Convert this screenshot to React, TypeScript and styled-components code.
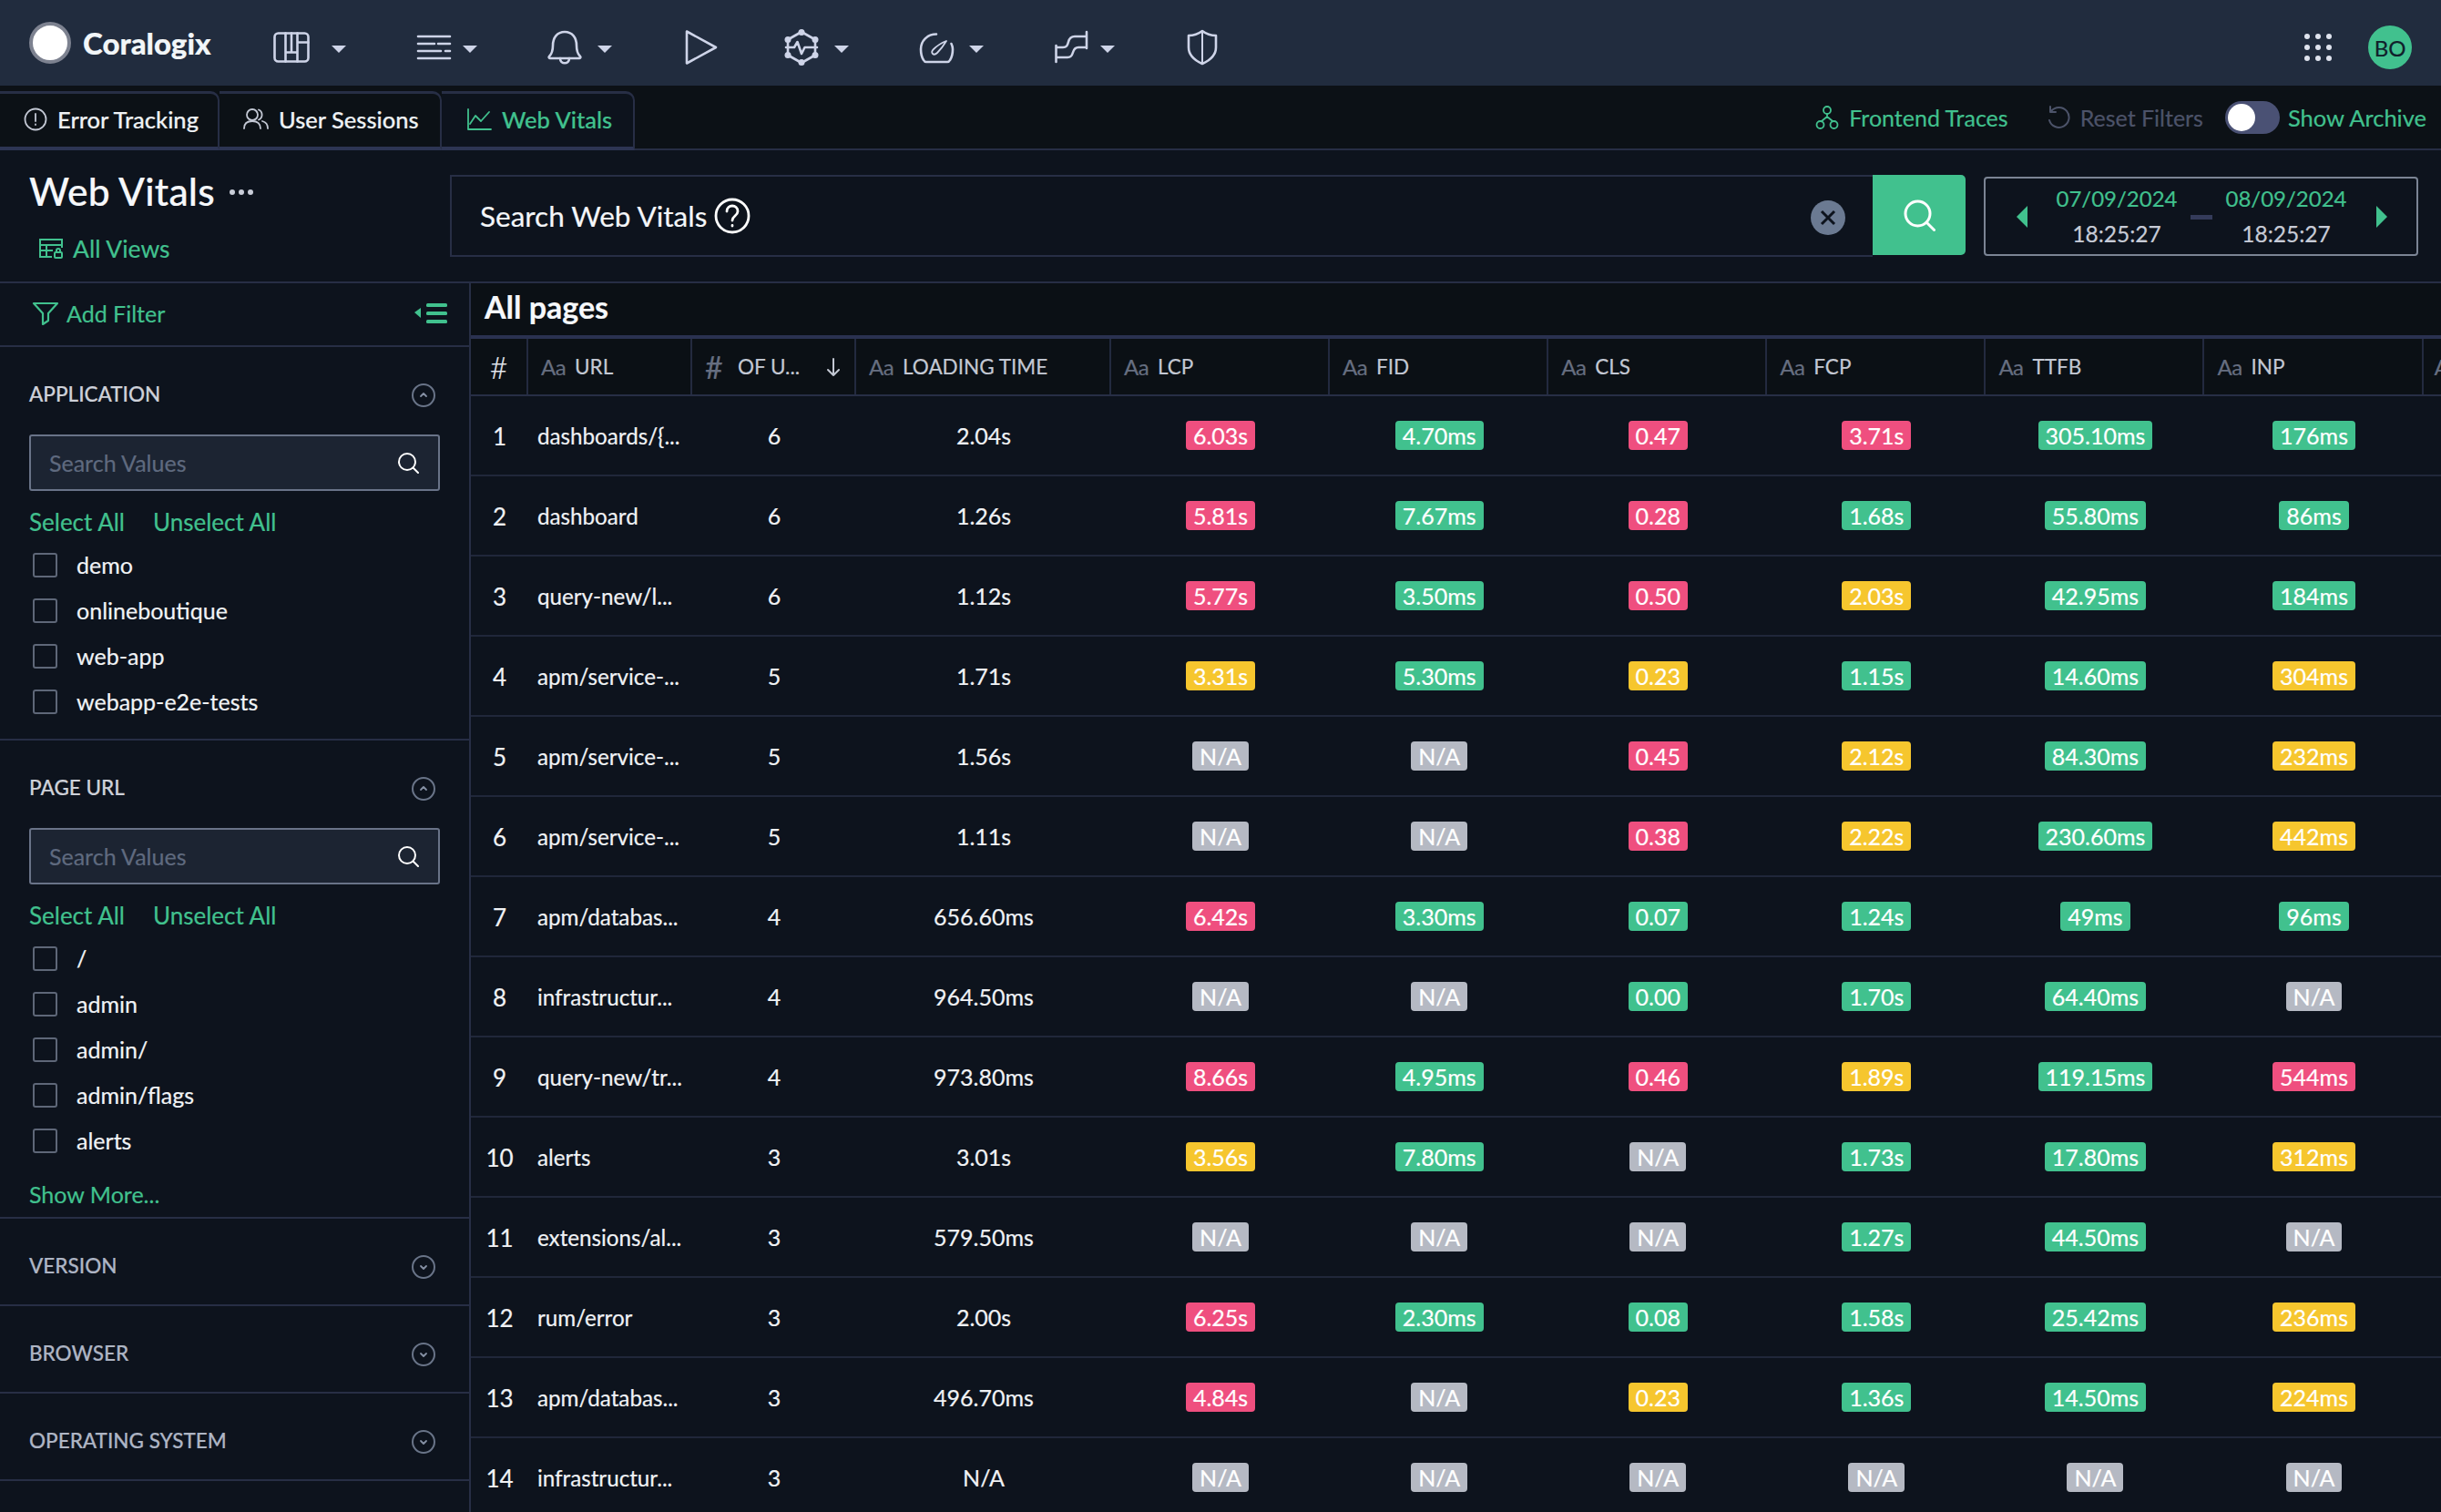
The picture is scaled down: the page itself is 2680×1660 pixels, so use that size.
import React from "react";
import styled, { createGlobalStyle } from "styled-components";

const GREEN = "#41c18e";
const LINE = "#272e45";
const ICON = "#ced4e8";
const FONT = `"Lato", "Noto Sans", sans-serif`;

const Global = createGlobalStyle`
  html, body { margin: 0; padding: 0; background: #0d131d; }
  body { font-family: ${FONT}; overflow: hidden; -webkit-text-stroke: 0.2px; }
  * { box-sizing: border-box; }
`;

const Page = styled.div`
  width: 2680px;
  height: 1660px;
  display: flex;
  flex-direction: column;
  overflow: hidden;
  background: #0d131d;
  color: #fff;
`;

/* ---------- top bar ---------- */
const TopBar = styled.header`
  height: 94px;
  flex: none;
  display: flex;
  align-items: center;
  background: #212c3e;
  padding-left: 32px;
  padding-right: 32px;
`;
const Logo = styled.div`
  width: 268px;
  flex: none;
  display: flex;
  align-items: center;
  gap: 13px;
`;
const LogoDot = styled.span`
  width: 46px;
  height: 46px;
  border-radius: 50%;
  background: #fff;
  border: 4px solid #7d8290;
`;
const LogoText = styled.span`
  font-size: 33px;
  font-weight: 900;
  color: #f2f6f8;
`;
const NavItem = styled.div<{ $w: number; $gap: number }>`
  width: ${(p) => p.$w}px;
  flex: none;
  margin-top: 10px;
  display: flex;
  align-items: center;
  gap: ${(p) => p.$gap}px;
  color: ${ICON};
`;
const Caret = styled.span`
  width: 0;
  height: 0;
  border-left: 8px solid transparent;
  border-right: 8px solid transparent;
  border-top: 8px solid ${ICON};
  margin-top: 3px;
`;
const TopRight = styled.div`
  margin-left: auto;
  margin-top: 10px;
  display: flex;
  align-items: center;
  gap: 40px;
`;
const Avatar = styled.div`
  width: 48px;
  height: 48px;
  border-radius: 50%;
  background: ${GREEN};
  color: #10202a;
  font-size: 24px;
  display: flex;
  align-items: center;
  justify-content: center;
`;

const Ic = ({ children, s = 40 }: { children: React.ReactNode; s?: number }) => (
  <svg width={s} height={s} viewBox="0 0 40 40" fill="none" stroke="currentColor" strokeWidth="2.6" strokeLinecap="round" strokeLinejoin="round">
    {children}
  </svg>
);

/* ---------- sub bar ---------- */
const SubBar = styled.div`
  height: 71px;
  flex: none;
  display: flex;
  align-items: flex-end;
  background: #0c1116;
  border-bottom: 2px solid ${LINE};
`;
const Tab = styled.div<{ $w: number; $active?: boolean }>`
  width: ${(p) => p.$w}px;
  height: 65px;
  margin-bottom: -2px;
  display: flex;
  align-items: center;
  gap: 11px;
  padding-left: ${(p) => (p.$active ? 27 : 26)}px;
  padding-bottom: 3px;
  font-size: 25.5px;
  font-weight: 500;
  background: ${(p) => (p.$active ? "#0d131d" : "#0c1116")};
  border-top: 3px solid ${LINE};
  border-right: 2px solid ${LINE};
  border-bottom: 4px solid #2d3553;
  border-top-right-radius: 10px;
  color: ${(p) => (p.$active ? GREEN : "#eef1f4")};
  svg { color: ${(p) => (p.$active ? GREEN : "#c3c8d4")}; }
`;
const SubRight = styled.div`
  margin-left: auto;
  align-self: center;
  display: flex;
  align-items: center;
  padding-right: 16px;
`;
const SubAction = styled.div<{ $muted?: boolean; $mr?: number }>`
  display: flex;
  align-items: center;
  gap: 11px;
  font-size: 25px;
  margin-right: ${(p) => p.$mr ?? 0}px;
  color: ${(p) => (p.$muted ? "#4c5369" : GREEN)};
`;
const ArchiveLabel = styled(SubAction)`
  font-size: 25.5px;
`;
const Toggle = styled.div`
  width: 60px;
  height: 36px;
  border-radius: 18px;
  background: #4a5174;
  padding: 3px;
  margin-right: 9px;
  display: flex;
`;
const Knob = styled.span`
  width: 30px;
  height: 30px;
  border-radius: 50%;
  background: #fff;
`;

/* ---------- header ---------- */
const Header = styled.div`
  height: 146px;
  flex: none;
  display: flex;
  border-bottom: 2px solid ${LINE};
  padding-left: 32px;
`;
const TitleBlock = styled.div`
  width: 462px;
  flex: none;
  display: flex;
  flex-direction: column;
`;
const TitleRow = styled.div`
  display: flex;
  align-items: center;
  gap: 16px;
  margin-top: 19px;
  height: 50px;
  font-size: 42.5px;
  font-weight: 500;
  color: #f6f8fb;
  letter-spacing: 0.2px;
`;
const Dots = styled.span`
  display: flex;
  gap: 4px;
  margin-top: 4px;
`;
const Dot = styled.i`
  width: 6px;
  height: 6px;
  border-radius: 50%;
  background: #c8cdd8;
`;
const AllViews = styled.div`
  display: flex;
  align-items: center;
  gap: 10px;
  margin-top: 23px;
  margin-left: 10px;
  font-size: 26.5px;
  color: ${GREEN};
`;
const SearchBox = styled.div`
  margin-top: 27px;
  width: 1562px;
  height: 90px;
  flex: none;
  display: flex;
  align-items: center;
  border: solid ${LINE};
  border-width: 2px 0 2px 2px;
  padding-left: 31px;
  padding-right: 30px;
  font-size: 31.5px;
  color: #f4f6f9;
  gap: 8px;
`;
const ClearBtn = styled.span`
  margin-left: auto;
  margin-top: 4px;
  width: 38px;
  height: 38px;
  border-radius: 50%;
  background: #6b7a92;
  color: #0d131d;
  display: flex;
  align-items: center;
  justify-content: center;
`;
const SearchBtn = styled.div`
  margin-top: 27px;
  width: 102px;
  height: 88px;
  flex: none;
  background: ${GREEN};
  border-radius: 0 5px 5px 0;
  display: flex;
  align-items: center;
  justify-content: center;
  color: #fff;
`;
const DateBox = styled.div`
  margin-top: 29px;
  margin-left: 20px;
  width: 477px;
  height: 87px;
  flex: none;
  border: 2px solid #7b8494;
  border-radius: 4px;
  display: flex;
  align-items: center;
  padding: 0 28px 0 34px;
`;
const Tri = styled.span<{ $dir: "l" | "r" }>`
  width: 0;
  height: 0;
  flex: none;
  border-top: 12px solid transparent;
  border-bottom: 12px solid transparent;
  ${(p) => (p.$dir === "l" ? `border-right: 12px solid ${GREEN};` : `border-left: 12px solid ${GREEN};`)}
`;
const DateCol = styled.div`
  width: 160px;
  flex: none;
  margin-top: -2px;
  display: flex;
  flex-direction: column;
  align-items: center;
  gap: 12px;
  line-height: 27px;
`;
const DateVal = styled.span`
  color: ${GREEN};
  font-size: 24px;
`;
const TimeVal = styled.span`
  color: #c7cbd6;
  font-size: 24.5px;
`;
const DateDash = styled.span`
  width: 24px;
  height: 5px;
  flex: none;
  margin: 2px 1px 0;
  background: #343b5a;
`;
const DateFirst = styled(DateCol)`
  margin-left: 18px;
`;
const DateLast = styled(DateCol)`
  margin-right: 19px;
`;

/* ---------- body ---------- */
const Main = styled.div`
  flex: 1;
  min-height: 0;
  display: flex;
`;
const Sidebar = styled.aside`
  width: 517px;
  flex: none;
  border-right: 2px solid ${LINE};
  display: flex;
  flex-direction: column;
`;
const AddFilter = styled.div`
  height: 70px;
  flex: none;
  display: flex;
  align-items: center;
  padding-left: 35px;
  padding-right: 24px;
  padding-bottom: 2px;
  gap: 8px;
  border-bottom: 2px solid ${LINE};
  font-size: 25px;
  color: ${GREEN};
`;
const CollapseIcon = styled.span`
  margin-left: auto;
  display: flex;
`;
const Section = styled.section<{ $collapsed?: boolean }>`
  flex: none;
  padding: 28px 32px ${(p) => (p.$collapsed ? 20 : 16)}px;
  border-bottom: 2px solid ${LINE};
`;
const SectionHead = styled.div<{ $open?: boolean }>`
  height: 46px;
  display: flex;
  align-items: center;
  justify-content: space-between;
  padding-right: 5px;
  font-size: 22.5px;
  font-weight: 500;
  color: ${(p) => (p.$open ? "#ced1d9" : "#aeb5c4")};
`;
const Chevron = styled.span`
  width: 26px;
  height: 26px;
  border-radius: 50%;
  border: 2px solid #697488;
  margin-top: 3px;
  color: #8590a4;
  display: flex;
  align-items: center;
  justify-content: center;
`;
const SearchInput = styled.div`
  margin-top: 22px;
  height: 62px;
  display: flex;
  align-items: center;
  justify-content: space-between;
  background: #1c2432;
  border: 2px solid #697388;
  border-radius: 3px;
  padding: 0 21px 0 20px;
  font-size: 25px;
  color: #5f6a7f;
  svg { color: #fff; }
`;
const LinkRow = styled.div`
  margin-top: 12px;
  height: 44px;
  display: flex;
  align-items: center;
  gap: 31px;
  font-size: 26px;
  color: ${GREEN};
`;
const Item = styled.div`
  height: 50px;
  display: flex;
  align-items: center;
  gap: 21px;
  padding-left: 4px;
  font-size: 25px;
  color: #f1f3f6;
`;
const Check = styled.span`
  width: 27px;
  height: 27px;
  flex: none;
  border: 2px solid #5e6778;
  border-radius: 3px;
`;
const ShowMore = styled.div`
  margin-top: 12px;
  margin-bottom: -13px;
  height: 44px;
  display: flex;
  align-items: center;
  font-size: 25px;
  color: ${GREEN};
`;

/* ---------- table ---------- */
const Content = styled.div`
  flex: 1;
  min-width: 0;
  display: flex;
  flex-direction: column;
  overflow: hidden;
`;
const TableTitle = styled.div`
  height: 57px;
  flex: none;
  display: flex;
  align-items: center;
  padding-left: 15px;
  padding-bottom: 6px;
  font-size: 34px;
  font-weight: 700;
  color: #f6f8fb;
  background: #0b1015;
`;
const cols = "63px 180px 180px 280px repeat(6, 240.1px) 23px";
const HeadRow = styled.div`
  height: 67px;
  flex: none;
  display: grid;
  grid-template-columns: ${cols};
  border-top: 4px solid #2a3150;
  border-bottom: 2px solid ${LINE};
  background: #0b1015;
`;
const HeadCell = styled.div`
  display: flex;
  align-items: center;
  gap: 10px;
  padding-left: 14px;
  border-right: 2px solid #232a3f;
  font-size: 22.5px;
  color: #c3c8d3;
  white-space: nowrap;
  overflow: hidden;
`;
const HashHead = styled(HeadCell)`
  justify-content: center;
  padding-left: 0;
  color: #e4e7ee;
  font-size: 34px;
  font-weight: 300;
`;
const LastHead = styled(HeadCell)`
  border-right: 0;
  padding-left: 12px;
`;
const Aa = styled.span`
  font-size: 24px;
  color: #666e80;
  width: 27px;
  flex: none;
  letter-spacing: -0.5px;
`;
const Hash = styled(Aa)`
  font-size: 34px;
  width: 26px;
`;
const SortIcon = styled.span`
  margin-left: auto;
  margin-right: 14px;
  display: flex;
  color: #c3c8d3;
`;
const Row = styled.div`
  height: 88px;
  flex: none;
  display: grid;
  grid-template-columns: ${cols};
  align-items: center;
  border-bottom: 2px solid #20273a;
  font-size: 25px;
  color: #f0f2f5;
`;
const IndexCell = styled.div`
  text-align: center;
  font-size: 26px;
  padding-top: 1px;
`;
const UrlCell = styled.div`
  padding-left: 10px;
  font-size: 24.2px;
  white-space: nowrap;
`;
const Center = styled.div`
  display: flex;
  justify-content: center;
`;
const COLORS: Record<string, string> = {
  r: "#ef4f7f",
  g: "#41c18e",
  y: "#f6c62e",
  n: "#b5b9c3",
};
const Badge = styled.span<{ $k: string }>`
  height: 32px;
  padding: 0 8px;
  border-radius: 4px;
  display: inline-flex;
  align-items: center;
  font-size: 25px;
  color: #fff;
  background: ${(p) => COLORS[p.$k]};
`;

type V = [string, string];
const N: V = ["N/A", "n"];
const rows: [string, string, string, V, V, V, V, V, V][] = [
  ["dashboards/{...", "6", "2.04s", ["6.03s", "r"], ["4.70ms", "g"], ["0.47", "r"], ["3.71s", "r"], ["305.10ms", "g"], ["176ms", "g"]],
  ["dashboard", "6", "1.26s", ["5.81s", "r"], ["7.67ms", "g"], ["0.28", "r"], ["1.68s", "g"], ["55.80ms", "g"], ["86ms", "g"]],
  ["query-new/l...", "6", "1.12s", ["5.77s", "r"], ["3.50ms", "g"], ["0.50", "r"], ["2.03s", "y"], ["42.95ms", "g"], ["184ms", "g"]],
  ["apm/service-...", "5", "1.71s", ["3.31s", "y"], ["5.30ms", "g"], ["0.23", "y"], ["1.15s", "g"], ["14.60ms", "g"], ["304ms", "y"]],
  ["apm/service-...", "5", "1.56s", N, N, ["0.45", "r"], ["2.12s", "y"], ["84.30ms", "g"], ["232ms", "y"]],
  ["apm/service-...", "5", "1.11s", N, N, ["0.38", "r"], ["2.22s", "y"], ["230.60ms", "g"], ["442ms", "y"]],
  ["apm/databas...", "4", "656.60ms", ["6.42s", "r"], ["3.30ms", "g"], ["0.07", "g"], ["1.24s", "g"], ["49ms", "g"], ["96ms", "g"]],
  ["infrastructur...", "4", "964.50ms", N, N, ["0.00", "g"], ["1.70s", "g"], ["64.40ms", "g"], N],
  ["query-new/tr...", "4", "973.80ms", ["8.66s", "r"], ["4.95ms", "g"], ["0.46", "r"], ["1.89s", "y"], ["119.15ms", "g"], ["544ms", "r"]],
  ["alerts", "3", "3.01s", ["3.56s", "y"], ["7.80ms", "g"], N, ["1.73s", "g"], ["17.80ms", "g"], ["312ms", "y"]],
  ["extensions/al...", "3", "579.50ms", N, N, N, ["1.27s", "g"], ["44.50ms", "g"], N],
  ["rum/error", "3", "2.00s", ["6.25s", "r"], ["2.30ms", "g"], ["0.08", "g"], ["1.58s", "g"], ["25.42ms", "g"], ["236ms", "y"]],
  ["apm/databas...", "3", "496.70ms", ["4.84s", "r"], N, ["0.23", "y"], ["1.36s", "g"], ["14.50ms", "g"], ["224ms", "y"]],
  ["infrastructur...", "3", "N/A", N, N, N, N, N, N],
];

const SearchGlass = ({ s = 24 }: { s?: number }) => (
  <svg width={s} height={s} viewBox="0 0 24 24" fill="none" stroke="currentColor" strokeWidth="2" strokeLinecap="round">
    <circle cx="11" cy="11" r="9" />
    <path d="M17.5 17.5 23 23" />
  </svg>
);

const Down = () => (
  <svg width="12" height="12" viewBox="0 0 12 12" fill="none" stroke="currentColor" strokeWidth="1.8" strokeLinecap="round" strokeLinejoin="round">
    <path d="M3 5l3 3 3-3" />
  </svg>
);
const Up = () => (
  <svg width="12" height="12" viewBox="0 0 12 12" fill="none" stroke="currentColor" strokeWidth="1.8" strokeLinecap="round" strokeLinejoin="round">
    <path d="M3 7l3-3 3 3" />
  </svg>
);

const Facet = ({ title, items, more }: { title: string; items: string[]; more?: boolean }) => (
  <Section>
    <SectionHead $open>
      <span>{title}</span>
      <Chevron><Up /></Chevron>
    </SectionHead>
    <SearchInput>
      <span>Search Values</span>
      <SearchGlass />
    </SearchInput>
    <LinkRow>
      <span>Select All</span>
      <span>Unselect All</span>
    </LinkRow>
    {items.map((it) => (
      <Item key={it}>
        <Check />
        <span>{it}</span>
      </Item>
    ))}
    {more && <ShowMore>Show More...</ShowMore>}
  </Section>
);

const Collapsed = ({ title }: { title: string }) => (
  <Section $collapsed>
    <SectionHead>
      <span>{title}</span>
      <Chevron><Down /></Chevron>
    </SectionHead>
  </Section>
);

const Metric = ({ v }: { v: V }) => (
  <Center>
    <Badge $k={v[1]}>{v[0]}</Badge>
  </Center>
);

const metricHeads = ["LCP", "FID", "CLS", "FCP", "TTFB", "INP"];

export default function App() {
  return (
    <Page>
      <Global />
      <TopBar>
        <Logo>
          <LogoDot />
          <LogoText>Coralogix</LogoText>
        </Logo>
        <NavItem $w={156} $gap={24}>
          <Ic>
            <rect x="1.5" y="4.5" width="37" height="31" rx="4" />
            <path d="M13.5 4.500v31M26.500 4.500v31M13.500 25.500h13M20 4.500v21M26.500 14.500h12" />
          </Ic>
          <Caret />
        </NavItem>
        <NavItem $w={144} $gap={12}>
          <Ic>
            <path d="M3 8h35M3 16h18M25 16h13M3 24h25M33 24h5M3 32h35" />
          </Ic>
          <Caret />
        </NavItem>
        <NavItem $w={149} $gap={16}>
          <Ic>
            <path d="M3 30c3-3 4-6 4-12 0-9 5-15 13-15s13 6 13 15c0 6 1 9 4 12 1 1 0 2-1 2H4c-1 0-2-1-1-2z" />
            <path d="M15 32c0 7 10 7 10 0" />
          </Ic>
          <Caret />
        </NavItem>
        <NavItem $w={111} $gap={0}>
          <Ic>
            <path d="M5 2.500 37 20 5 37.500z" />
          </Ic>
        </NavItem>
        <NavItem $w={148} $gap={16}>
          <Ic>
            <path d="M20 3 35 11.500v17L20 37 5 28.500V11.500z" />
            <path d="M3 20h9l3.500-6 4.500 13 3.500-7H37" />
            <g fill="currentColor" stroke="none">
              <circle cx="20" cy="3.500" r="3.500" />
              <circle cx="35" cy="11.500" r="3.500" />
              <circle cx="35" cy="28.500" r="3.500" />
              <circle cx="20" cy="36.500" r="3.500" />
              <circle cx="5" cy="28.500" r="3.500" />
              <circle cx="5" cy="11.500" r="3.500" />
            </g>
          </Ic>
          <Caret />
        </NavItem>
        <NavItem $w={149} $gap={16}>
          <Ic>
            <path d="M20 5.500C10 5.500 3 13 3 22c0 5 1 9 3 12 .5 1 1.500 2 3 2h23c1.500 0 2.500-1 3-2 2-3 3-7 3-12 0-2-.5-4-1.500-6" />
            <path d="M31 13c-3 5-7 10-10 13-2 2-4 2-5 1s-1-3 1-5c3-3 9-7 14-9z" strokeWidth="1.800" />
          </Ic>
          <Caret />
        </NavItem>
        <NavItem $w={143} $gap={11}>
          <Ic>
            <path d="M2.500 18v18M2.500 20H10c4 0 5-2 6-6s3-6 7-6h13M2.500 31H15c4 0 5-2 6-5.500s3-5.500 6-5.500h9M36 3v18" />
          </Ic>
          <Caret />
        </NavItem>
        <NavItem $w={40} $gap={0}>
          <Ic>
            <path d="M20 2c4 3 9 5 15 5v13c0 8-6 14-15 18C11 34 5 28 5 20V7c6 0 11-2 15-5z" />
            <path d="M20 2v36" strokeWidth="2" />
          </Ic>
        </NavItem>
        <TopRight>
          <svg width="30" height="30" viewBox="0 0 30 30" fill="#dfe3ee">
            {[3, 15, 27].flatMap((y) =>
              [3, 15, 27].map((x) => <circle key={`${x}-${y}`} cx={x} cy={y} r="3" />)
            )}
          </svg>
          <Avatar>BO</Avatar>
        </TopRight>
      </TopBar>

      <SubBar>
        <Tab $w={241}>
          <svg width="26" height="26" viewBox="0 0 26 26" fill="none" stroke="currentColor" strokeWidth="1.800" strokeLinecap="round">
            <circle cx="13" cy="13" r="11.500" />
            <path d="M13 7v8M13 18.500v.5" />
          </svg>
          <span>Error Tracking</span>
        </Tab>
        <Tab $w={244}>
          <svg width="28" height="26" viewBox="0 0 28 26" fill="none" stroke="currentColor" strokeWidth="1.800" strokeLinecap="round">
            <circle cx="10" cy="8" r="6" />
            <path d="M17 2.500a6 6 0 0 1 0 11M1 23c0-5 3-8 9-8s9 3 9 8M21 15c4 1 6 4 6 8" />
          </svg>
          <span>User Sessions</span>
        </Tab>
        <Tab $w={212} $active>
          <svg width="28" height="26" viewBox="0 0 28 26" fill="none" stroke="currentColor" strokeWidth="1.800" strokeLinecap="round" strokeLinejoin="round">
            <path d="M2 2v22h25M4 18l6-9 6 6 9-10" />
          </svg>
          <span>Web Vitals</span>
        </Tab>
        <SubRight>
          <SubAction $mr={42}>
            <svg width="26" height="28" viewBox="0 0 26 28" fill="none" stroke="currentColor" strokeWidth="1.800" strokeLinecap="round">
              <circle cx="13" cy="6" r="4" />
              <circle cx="5.500" cy="22" r="4" />
              <circle cx="20.500" cy="22" r="4" />
              <path d="M13 10v3M7 18l6-5 6 5" />
            </svg>
            <span>Frontend Traces</span>
          </SubAction>
          <SubAction $muted $mr={24}>
            <svg width="26" height="28" viewBox="0 0 26 28" fill="none" stroke="currentColor" strokeWidth="2" strokeLinecap="round" strokeLinejoin="round">
              <path d="M5 7a11 11 0 1 1-2 10M4 2v6h6" />
            </svg>
            <span>Reset Filters</span>
          </SubAction>
          <Toggle><Knob /></Toggle>
          <ArchiveLabel>Show Archive</ArchiveLabel>
        </SubRight>
      </SubBar>

      <Header>
        <TitleBlock>
          <TitleRow>
            <span>Web Vitals</span>
            <Dots><Dot /><Dot /><Dot /></Dots>
          </TitleRow>
          <AllViews>
            <svg width="28" height="24" viewBox="0 0 28 24" fill="none" stroke="currentColor" strokeWidth="2">
              <path d="M15 21H2V2h24v9M2 8h24M2 14h14M9 8v13" />
              <rect x="18" y="16" width="8" height="6" rx="1" />
              <path d="M20 16v-2a2 2 0 0 1 4 0v2" />
            </svg>
            <span>All Views</span>
          </AllViews>
        </TitleBlock>
        <SearchBox>
          <span>Search Web Vitals</span>
          <svg width="40" height="40" viewBox="0 0 40 40" fill="none" stroke="#fff" strokeWidth="2.800" strokeLinecap="round">
            <circle cx="20" cy="20" r="18" />
            <path d="M14 15c0-8 12-8 12 0 0 5-6 5-6 10M20 30.500v.5" />
          </svg>
          <ClearBtn>
            <svg width="20" height="20" viewBox="0 0 20 20" fill="none" stroke="currentColor" strokeWidth="3">
              <path d="M3 3l14 14M17 3 3 17" />
            </svg>
          </ClearBtn>
        </SearchBox>
        <SearchBtn>
          <SearchGlass s={36} />
        </SearchBtn>
        <DateBox>
          <Tri $dir="l" />
          <DateFirst>
            <DateVal>07/09/2024</DateVal>
            <TimeVal>18:25:27</TimeVal>
          </DateFirst>
          <DateDash />
          <DateLast>
            <DateVal>08/09/2024</DateVal>
            <TimeVal>18:25:27</TimeVal>
          </DateLast>
          <Tri $dir="r" />
        </DateBox>
      </Header>

      <Main>
        <Sidebar>
          <AddFilter>
            <svg width="30" height="26" viewBox="0 0 30 26" fill="none" stroke="currentColor" strokeWidth="2.200" strokeLinejoin="round">
              <path d="M2 2h26L18 13v8l-6 4V13z" />
            </svg>
            <span>Add Filter</span>
            <CollapseIcon>
              <svg width="36" height="24" viewBox="0 0 36 24" fill="currentColor">
                <path d="M0 11l7-5v11z" />
                <rect x="13" y="1" width="23" height="4" rx="1.500" />
                <rect x="13" y="10" width="23" height="4" rx="1.500" />
                <rect x="13" y="19" width="23" height="4" rx="1.500" />
              </svg>
            </CollapseIcon>
          </AddFilter>
          <Facet title="APPLICATION" items={["demo", "onlineboutique", "web-app", "webapp-e2e-tests"]} />
          <Facet title="PAGE URL" items={["/", "admin", "admin/", "admin/flags", "alerts"]} more />
          <Collapsed title="VERSION" />
          <Collapsed title="BROWSER" />
          <Collapsed title="OPERATING SYSTEM" />
        </Sidebar>
        <Content>
          <TableTitle>All pages</TableTitle>
          <HeadRow>
            <HashHead>#</HashHead>
            <HeadCell><Aa>Aa</Aa><span>URL</span></HeadCell>
            <HeadCell><Hash>#</Hash><span>OF U...</span><SortIcon>
              <svg width="18" height="24" viewBox="0 0 18 24" fill="none" stroke="currentColor" strokeWidth="2" strokeLinecap="round" strokeLinejoin="round">
                <path d="M9 3v18M3 15l6 6 6-6" />
              </svg>
            </SortIcon></HeadCell>
            <HeadCell><Aa>Aa</Aa><span>LOADING TIME</span></HeadCell>
            {metricHeads.map((h) => (
              <HeadCell key={h}><Aa>Aa</Aa><span>{h}</span></HeadCell>
            ))}
            <LastHead><Aa>Aa</Aa></LastHead>
          </HeadRow>
          {rows.map((r, i) => (
            <Row key={i}>
              <IndexCell>{i + 1}</IndexCell>
              <UrlCell>{r[0]}</UrlCell>
              <Center>{r[1]}</Center>
              <Center>{r[2]}</Center>
              <Metric v={r[3]} />
              <Metric v={r[4]} />
              <Metric v={r[5]} />
              <Metric v={r[6]} />
              <Metric v={r[7]} />
              <Metric v={r[8]} />
            </Row>
          ))}
        </Content>
      </Main>
    </Page>
  );
}
